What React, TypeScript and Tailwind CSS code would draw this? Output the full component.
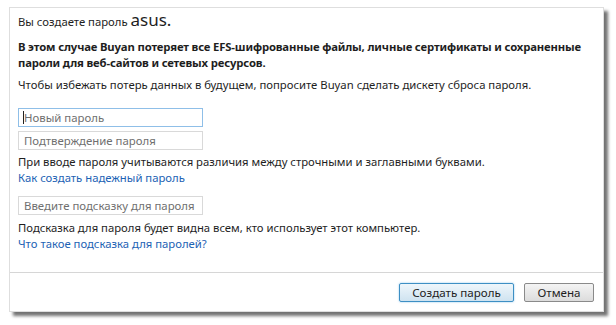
import React from 'react';

const font = { fontFamily: '"Noto Sans", "Open Sans", sans-serif' };

const Field: React.FC<{ placeholder: string; focused?: boolean }> = ({ placeholder, focused }) => (
  <div
    className={`relative h-[19px] w-[185px] whitespace-nowrap border bg-white px-[5px] text-[11.4px] leading-[17px] text-[#6f6f6f] ${
      focused ? 'border-[#8fbfe8]' : 'border-[#d9d9d9]'
    }`}
  >
    {focused && <span className="absolute left-[4px] top-[2px] h-[13px] w-px bg-[#222]" />}
    {placeholder}
  </div>
);

const App: React.FC = () => {
  return (
    <div className="min-h-[325px] w-[616px] bg-white pl-[9px] pt-[7px]" style={font}>
      <div className="flex h-[305px] w-[595px] flex-col border border-[#dedede] bg-white shadow-[4px_4px_3px_rgba(0,0,0,0.55)]">
        <div className="flex flex-1 flex-col px-[8px] pt-[4px] text-[11.3px] leading-[16px] text-[#1e1e1e]">
          <p>
            Вы создаете пароль <span className="text-[17px]">asus.</span>
          </p>
          <p className="mt-[9px] font-bold tracking-[-0.15px]">
            В этом случае Buyan потеряет все EFS-шифрованные файлы, личные сертификаты и сохраненные пароли для веб-сайтов и сетевых ресурсов.
          </p>
          <p className="mt-[6px]">
            Чтобы избежать потерь данных в будущем, попросите Buyan сделать дискету сброса пароля.
          </p>

          <div className="mt-[15px] flex flex-col gap-[4px]">
            <Field placeholder="Новый пароль" focused />
            <Field placeholder="Подтверждение пароля" />
          </div>
          <p className="mt-[4px]">При вводе пароля учитываются различия между строчными и заглавными буквами.</p>
          <a className="text-[#1c62b4]">Как создать надежный пароль</a>

          <div className="mt-[10px]">
            <Field placeholder="Введите подсказку для пароля" />
          </div>
          <p className="mt-[5px]">Подсказка для пароля будет видна всем, кто использует этот компьютер.</p>
          <a className="text-[#1c62b4]">Что такое подсказка для паролей?</a>
        </div>

        <div className="flex h-[39px] items-center justify-end gap-[10px] border-t border-[#d6d6d6] pr-[9px]">
          <button className="h-[19px] w-[115px] rounded-[2px] border border-[#3d8fc4] bg-gradient-to-b from-[#eef6fb] to-[#cfe3f0] text-[11.6px] leading-[17px] text-[#1e1e1e] shadow-[0_0_2px_rgba(80,170,230,0.7)]">
            Создать пароль
          </button>
          <button className="h-[19px] w-[70px] rounded-[2px] border border-[#8a8a8a] bg-gradient-to-b from-[#f4f4f4] to-[#dcdcdc] text-[11.6px] leading-[17px] text-[#1e1e1e]">
            Отмена
          </button>
        </div>
      </div>
    </div>
  );
};

export default App;
